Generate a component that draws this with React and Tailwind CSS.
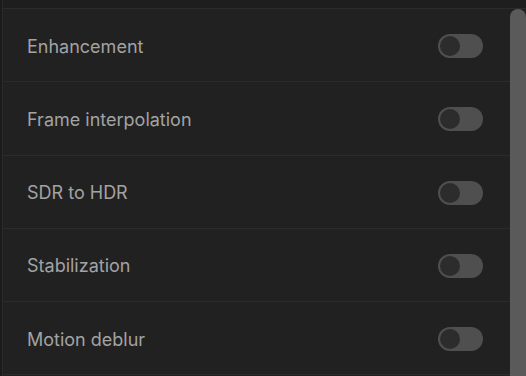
import React, { useState } from 'react';

const items = ['Enhancement', 'Frame interpolation', 'SDR to HDR', 'Stabilization', 'Motion deblur'];

const Toggle = ({ on, onClick }) => (
    <button
        onClick={onClick}
        className="relative w-[45px] h-[24px] rounded-full bg-[#4f4f4f] flex items-center px-[2px]"
    >
        <span className="w-[20px] h-[20px] rounded-full bg-[#2c2c2c]" />
    </button>
);

const App = () => {
    const [state, setState] = useState(items.map(() => false));

    return (
        <div className="w-[526px] h-[376px] bg-[#212121] flex overflow-hidden" style={{ fontFamily: 'Inter, "Noto Sans", sans-serif' }}>
            {/* Left edge */}
            <div className="w-[3px] bg-[#1b1b1b] border-r border-[#2a2a2a]" />

            {/* List */}
            <div className="flex-1 flex flex-col">
                <div className="h-[9px] bg-[#1e1e1e] border-b border-[#2b2b2b] shrink-0" />
                {items.map((label, i) => (
                    <div key={label} className="h-[73.25px] shrink-0 flex items-center justify-between pl-[24px] pr-[27px] pt-[2px] border-b border-[#2b2b2b]">
                        <span className="text-[18px] text-[#a3a3a3]">{label}</span>
                        <Toggle on={state[i]} onClick={() => setState(s => s.map((v, j) => (j === i ? !v : v)))} />
                    </div>
                ))}
            </div>

            {/* Scrollbar */}
            <div className="w-[16px] flex flex-col bg-[#212121]">
                <div className="h-[9px] bg-[#1e1e1e] border-b border-[#2b2b2b]" />
                <div className="flex-1 bg-[#5a5a5a] rounded-t-full" />
            </div>
        </div>
    );
};

export default App;
